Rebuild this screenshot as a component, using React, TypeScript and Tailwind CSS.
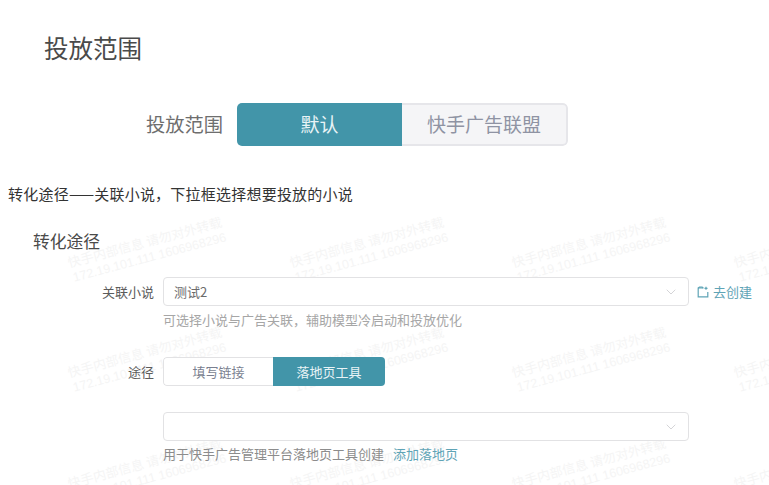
import { ChevronDown } from 'lucide-react';

const font = { fontFamily: '"Noto Sans CJK SC", "Noto Sans", sans-serif' };

const wmRows = [0, 1, 2];
const wmCols = [0, 1, 2, 3];

function Watermark() {
  return (
    <div className="pointer-events-none absolute inset-0 overflow-hidden">
      {wmRows.map((r) =>
        wmCols.map((c) => (
          <div
            key={`${r}-${c}`}
            className="absolute w-[170px] origin-top-left -rotate-[15deg] text-[13px] leading-[16px] whitespace-nowrap text-[#f5f5f5]"
            style={{ left: 66 + c * 222, top: 255 + r * 110.4 }}
          >
            <div>快手内部信息 请勿对外转载</div>
            <div className="pl-[1px] font-['Liberation_Sans'] text-[12.5px]">172.19.101.111 1606968296</div>
          </div>
        ))
      )}
    </div>
  );
}

function SelectBox({ value }: { value?: string }) {
  return (
    <div className="flex h-[29px] w-[526px] items-center justify-between rounded-[4px] border border-[#e2e2e4] bg-white pr-[9px] pl-[10px] text-[13px] text-[#6b6b6b]">
      <span>{value}</span>
      <ChevronDown className="h-[16px] w-[16px] text-[#c4c4c8]" strokeWidth={1.1} />
    </div>
  );
}

export default function App() {
  return (
    <div className="relative h-[485px] w-[769px] overflow-hidden bg-white" style={font}>
      <Watermark />
      <div className="relative">
        <div className="pt-[31px] pl-[44px] text-[24.5px] leading-[34px] text-[#4a4a4a]">投放范围</div>

        <div className="mt-[38px] flex items-center pl-[146px]">
          <span className="w-[91px] text-[19.25px] text-[#6e6e6e]">投放范围</span>
          <div className="flex h-[43px] w-[331px] overflow-hidden rounded-[5px] text-[19px]">
            <div className="flex w-[165px] items-center justify-center bg-[#4295a9] text-[#e8f3f6]">默认</div>
            <div className="flex flex-1 items-center justify-center rounded-r-[5px] border-2 border-l-0 border-[#e6e6ea] bg-[#f5f5f7] text-[#8f93a3]">
              快手广告联盟
            </div>
          </div>
        </div>

        <p className="mt-[38px] pl-[8px] text-[15px] leading-[20px] tracking-[0.22px] text-[#333333]">转化途径——关联小说，下拉框选择想要投放的小说</p>

        <div className="mt-[25px] pl-[33px] text-[16.75px] leading-[24px] text-[#4a4a4a]">转化途径</div>

        <div className="mt-[24px] flex items-center">
          <span className="w-[154px] text-right text-[13px] text-[#5c5c5c]">关联小说</span>
          <div className="ml-[9px]">
            <SelectBox value="测试2" />
          </div>
          <span className="ml-[8px] flex items-center gap-[4px] text-[13px] text-[#5fa4b6]">
            <svg width="12" height="12" viewBox="0 0 12 12" fill="none" stroke="#5fa4b6" strokeWidth="1.2">
              <path d="M6.5 2H1.2v8.8h9.6V6" />
              <path d="M1.2 2l1.2-.8h2.8l1 1" />
              <path d="M9 .8v3M7.5 2.3h3" />
            </svg>
            去创建
          </span>
        </div>
        <p className="mt-[5px] pl-[163px] text-[13px] leading-[18px] text-[#a6a6a6]">可选择小说与广告关联，辅助模型冷启动和投放优化</p>

        <div className="mt-[28px] flex items-center">
          <span className="w-[154px] text-right text-[13px] text-[#5c5c5c]">途径</span>
          <div className="ml-[9px] flex h-[29px] w-[222px] overflow-hidden rounded-[4px] text-[13px]">
            <div className="flex w-[110px] items-center justify-center rounded-l-[4px] border border-r-0 border-[#e2e2e4] bg-white text-[#7a7f90]">填写链接</div>
            <div className="flex flex-1 items-center justify-center bg-[#4295a9] text-[#e8f3f6]">落地页工具</div>
          </div>
        </div>

        <div className="mt-[26px] pl-[163px]">
          <SelectBox />
        </div>
        <p className="mt-[4px] pl-[163px] text-[13px] leading-[18px] text-[#8c8c8c]">
          用于快手广告管理平台落地页工具创建
          <span className="ml-[9px] text-[#5fa4b6]">添加落地页</span>
        </p>
      </div>
    </div>
  );
}
